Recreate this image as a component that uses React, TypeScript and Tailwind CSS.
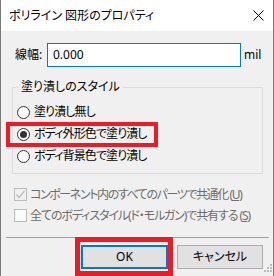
export default function App() {
  const font =
    "font-['Noto_Sans','Noto_Sans_CJK_JP',sans-serif] [font-feature-settings:'palt']";
  return (
    <div className={`relative w-[274px] h-[276px] bg-[#f0f0f0] text-[12px] leading-none text-black ${font}`}>
      <div className="flex h-[276px] flex-col border-x border-[#7a7a7a] bg-[#f0f0f0]">
        {/* Title bar */}
        <div className="flex h-[31px] items-center justify-between bg-white pl-[8px] pr-[9px]">
          <span>ポリライン 図形のプロパティ</span>
          <svg width="11" height="11" viewBox="0 0 11 11" className="block">
            <path d="M0.5 0.5 L10.5 10.5 M10.5 0.5 L0.5 10.5" stroke="#000" strokeWidth="1" fill="none" />
          </svg>
        </div>

        {/* Body */}
        <div className="flex flex-1 flex-col pl-[11px] pr-[10px]">
          {/* Width row */}
          <div className="mt-[12px] flex h-[24px] items-center">
            <span className="ml-[3px] w-[32px]">線幅:</span>
            <div className="flex h-[24px] w-[194px] items-center border border-[#0078d7] bg-white pl-[5px]">
              0.000
            </div>
            <span className="ml-[3px]">mil</span>
          </div>

          {/* Fill style group */}
          <fieldset className="mt-[12px] border border-[#dcdcdc] pl-[4px] pb-[6px]">
            <legend className="ml-[1px] px-[3px] leading-[16px]">塗り潰しのスタイル</legend>
            <div className="mt-[6px] flex flex-col">
              <Radio label="塗り潰し無し" />
              <Radio label="ボディ外形色で塗り潰し" checked />
              <Radio label="ボディ背景色で塗り潰し" />
            </div>
          </fieldset>

          {/* Checkboxes */}
          <div className="mt-[10px] flex flex-col text-[#6d6d6d]">
            <div className="flex h-[21px] items-center">
              <div className="ml-[2px] flex h-[13px] w-[13px] shrink-0 items-center justify-center border border-[#bcbcbc] bg-[#f0f0f0]">
                <svg width="11" height="11" viewBox="0 0 11 11">
                  <path d="M1.5 5.5 L4 8.5 L9.5 2" stroke="#bcbcbc" strokeWidth="1.3" fill="none" />
                </svg>
              </div>
              <span className="ml-[3px] whitespace-nowrap tracking-[-1.4px]">
                コンポーネント内のすべてのパーツで共通化 (<u>U</u>)
              </span>
            </div>
            <div className="flex h-[21px] items-center">
              <div className="ml-[2px] h-[13px] w-[13px] shrink-0 border border-[#bcbcbc] bg-[#fcfcfc]" />
              <span className="ml-[3px] whitespace-nowrap tracking-[-1.1px]">
                全てのボディスタイル(ド・モルガン)で共有する (<u>S</u>)
              </span>
            </div>
          </div>

          {/* Separator */}
          <div className="mt-[11px] ml-[-6px] mr-[-6px] h-px bg-[#a0a0a0]" />

          {/* Buttons */}
          <div className="mt-[7px] flex justify-end gap-[9px]">
            <div className="flex h-[24px] w-[87px] items-center justify-center border-2 border-[#0078d7] bg-[#e1e1e1]">
              OK
            </div>
            <div className="flex h-[24px] w-[86px] items-center justify-center border border-[#adadad] bg-[#e1e1e1]">
              キャンセル
            </div>
          </div>
        </div>
      </div>

      {/* Resize grip */}
      <svg width="8" height="8" viewBox="0 0 8 8" className="absolute left-[264px] top-[264px]">
        <rect x="6" y="0" width="2" height="2" fill="#bcbcbc" />
        <rect x="3" y="3" width="2" height="2" fill="#bcbcbc" />
        <rect x="6" y="3" width="2" height="2" fill="#bcbcbc" />
        <rect x="0" y="6" width="2" height="2" fill="#bcbcbc" />
        <rect x="3" y="6" width="2" height="2" fill="#bcbcbc" />
        <rect x="6" y="6" width="2" height="2" fill="#bcbcbc" />
      </svg>

      {/* Red highlight annotations */}
      <div className="absolute left-[6px] top-[122px] h-[25px] w-[152px] border-4 border-[#ed1c24]" />
      <div className="absolute left-[75px] top-[237px] h-[39px] w-[98px] border-[5px] border-[#ed1c24]" />
    </div>
  );
}

function Radio({ label, checked = false }: { label: string; checked?: boolean }) {
  return (
    <div className="flex h-[22px] items-center">
      <div className="flex h-[13px] w-[13px] items-center justify-center rounded-full border border-[#333] bg-white">
        {checked && <div className="h-[7px] w-[7px] rounded-full bg-[#333]" />}
      </div>
      <span className="ml-[4px] tracking-[-0.9px]">{label}</span>
    </div>
  );
}
